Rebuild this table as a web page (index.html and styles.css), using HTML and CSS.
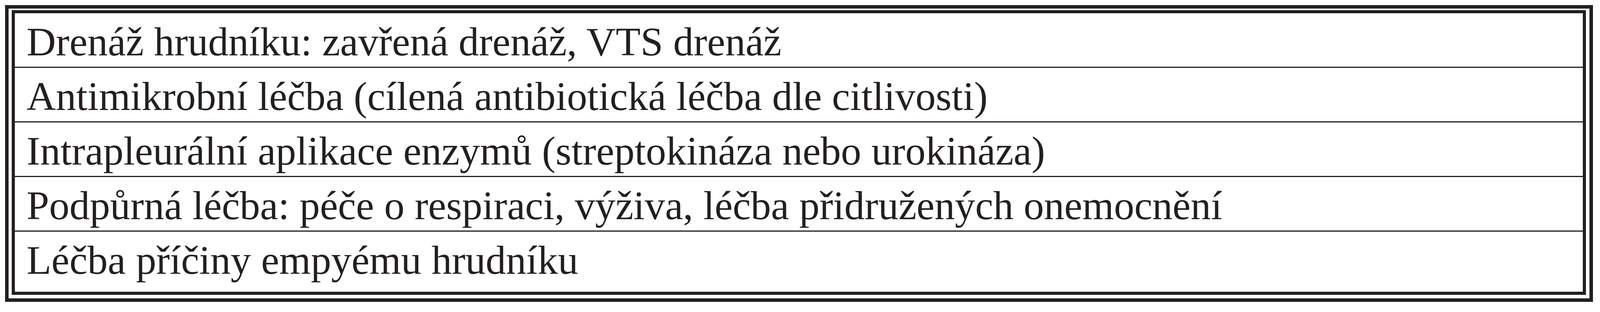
FILE: index.html
```html
<!DOCTYPE html>
<html lang="cs">
<head>
<meta charset="utf-8">
<title>Léčba empyému hrudníku</title>
<link rel="stylesheet" href="styles.css">
</head>
<body>
<div class="frame">
  <div class="box">
    <div class="row">Drenáž hrudníku: zavřená drenáž, VTS drenáž</div>
    <div class="row">Antimikrobní léčba (cílená antibiotická léčba dle citlivosti)</div>
    <div class="row">Intrapleurální aplikace enzymů (streptokináza nebo urokináza)</div>
    <div class="row">Podpůrná léčba: péče o respiraci, výživa, léčba přidružených onemocnění</div>
    <div class="row">Léčba příčiny empyému hrudníku</div>
  </div>
</div>
</body>
</html>
```

FILE: styles.css
```css
html, body {
  margin: 0;
  background: #ffffff;
}

body {
  padding: 13px 18px 0 13px;
  font-family: "Liberation Serif", "Times New Roman", serif;
  color: #231f20;
}

.frame {
  border: 9px solid #231f20;
  padding: 4px 9px 9px 8px;
}

.box {
  border: 8px solid #231f20;
  display: flex;
  flex-direction: column;
}

.row {
  box-sizing: border-box;
  height: 137px;
  padding: 21px 0 0 30px;
  font-size: 104px;
  line-height: 104px;
  white-space: nowrap;
  overflow: hidden;
}

.row + .row {
  height: 140px;
  border-top: 3px solid #231f20;
}

.row:last-child {
  height: 157px;
}
```
